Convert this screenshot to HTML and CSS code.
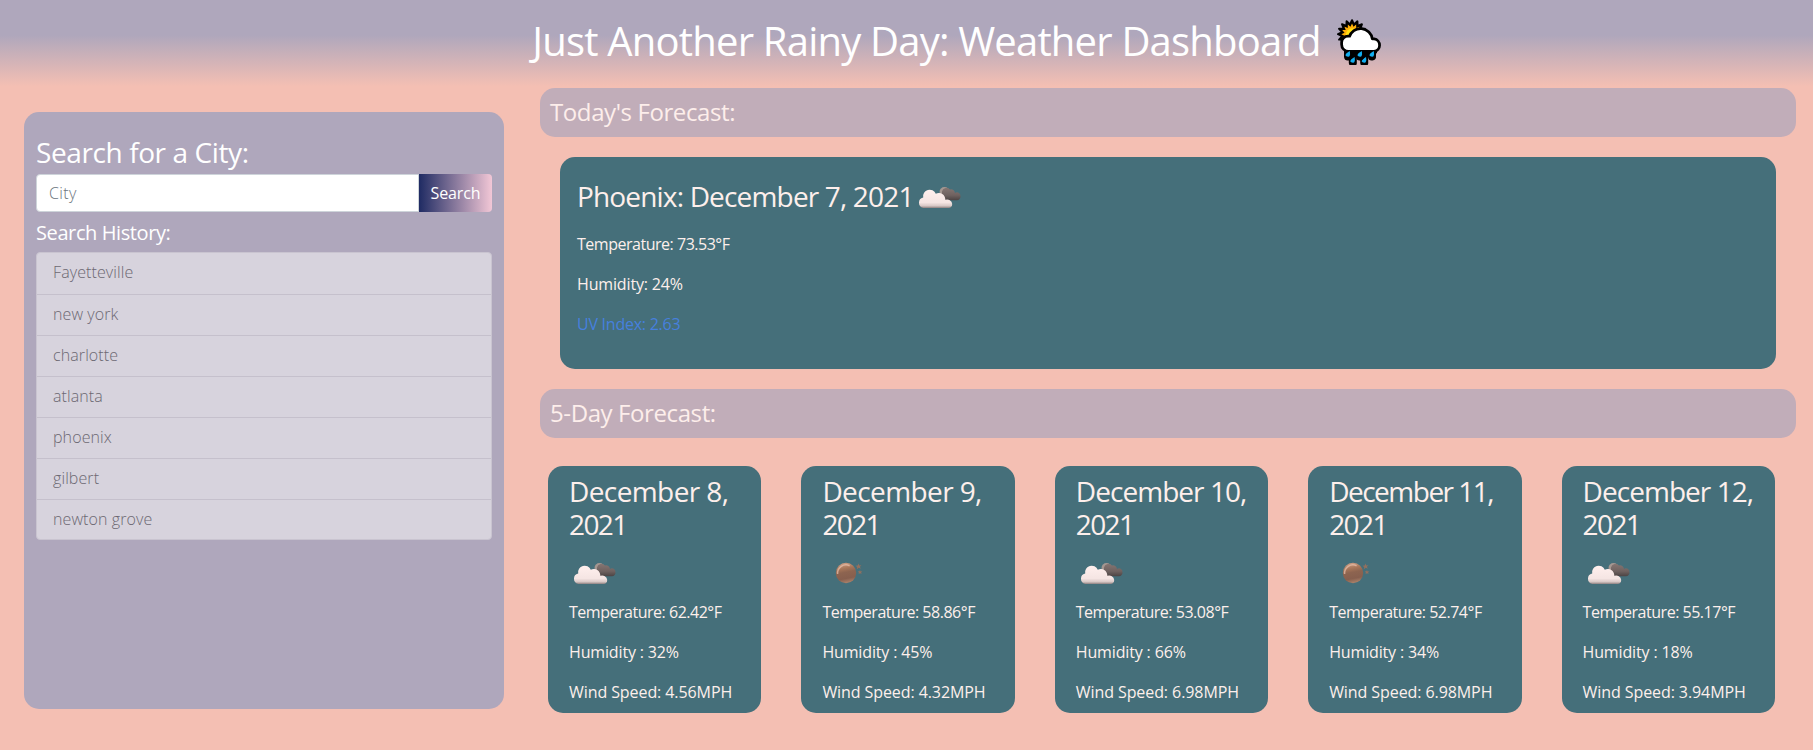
FILE: index.html
```html
<!DOCTYPE html>
<html lang="en">
<head>
<meta charset="utf-8">
<title>Weather Dashboard</title>
<link rel="stylesheet" href="styles.css">
</head>
<body>
<svg class="defs" aria-hidden="true">
  <defs>
    <linearGradient id="cloudFill" x1="0" y1="0" x2="0" y2="1">
      <stop offset="0" stop-color="#fff0ee"/><stop offset=".7" stop-color="#f5e5e3"/><stop offset=".88" stop-color="#d8c8c6"/><stop offset="1" stop-color="#8e8080"/>
    </linearGradient>
    <linearGradient id="darkFill" x1="0" y1="0" x2="0" y2="1">
      <stop offset="0" stop-color="#857572"/><stop offset=".6" stop-color="#6f6260"/><stop offset="1" stop-color="#4c4444"/>
    </linearGradient>
    <linearGradient id="moonFill" x1=".2" y1="0" x2=".4" y2="1">
      <stop offset="0" stop-color="#d3a58c"/><stop offset=".3" stop-color="#a87659"/><stop offset=".5" stop-color="#8d6450"/><stop offset=".8" stop-color="#875f4e"/><stop offset="1" stop-color="#a87f68"/>
    </linearGradient>
    <symbol id="clouds" viewBox="0 0 50 50">
      <circle cx="30.5" cy="20" r="5" fill="#a59791"/>
      <path d="M28 25V19.5a4.500 4.500 0 0 1 8-2a4 4 0 0 1 5 3.500a3.500 3.500 0 0 1 5.500 3.200a3.600 3.600 0 0 1-3.500 4H31z" fill="url(#darkFill)"/>
      <path d="M9.500 36a5 5 0 0 1-4.500-5.300a5.200 5.200 0 0 1 4.200-5.200a6.600 6.600 0 0 1 12.600-3.700a6.500 6.500 0 0 1 9.500 6a5 5 0 0 1 6.900 4.200a4 4 0 0 1-3.700 4z" fill="url(#cloudFill)"/>
    </symbol>
    <symbol id="moon" viewBox="0 0 50 50">
      <circle cx="24" cy="25" r="10.200" fill="url(#moonFill)"/>
      <path d="M15.600 26a8.400 8.400 0 0 1 12-8.300" fill="none" stroke="#e7bea8" stroke-width="1.500" opacity=".75"/>
      <path d="M36.500 15.500l.8 1.900 2.200-.2-1.600 1.500.9 2-2-.9-2 1.400.4-2.200-1.700-1.300 2.200-.2zM38 22l.6 1.400 1.700-.1-1.200 1.200.5 1.500-1.500-.7-1.500.8.300-1.600-1.200-1.100 1.600-.2z" fill="#93705e"/>
    </symbol>
  </defs>
</svg>

<header class="header">
  <h1 class="title">Just Another Rainy Day: Weather Dashboard</h1>
  <svg class="logo" viewBox="0 0 46 46">
    <defs>
      <path id="sun" d="M14 0L9.800 2 12.900 5.400 8.300 5.600 9.900 9.900 5.600 8.300 5.400 12.900 2 9.800 0 14-2 9.800-5.400 12.900-5.600 8.300-9.900 9.900-8.300 5.600-12.900 5.400-9.800 2-14 0-9.800-2-12.900-5.400-8.300-5.600-9.900-9.900-5.600-8.300-5.400-12.900-2-9.800 0-14 2-9.800 5.400-12.900 5.600-8.300 9.900-9.900 8.300-5.600 12.900-5.400 9.800-2z"/>
      <path id="cloud" d="M11.500 31a5.500 5.500 0 0 1-5.500-5.500v-2a5 5 0 0 1 5-5h2.500a10.500 10.500 0 0 1 20.500 1.800q.3 1 1.500 1h1.500a4.900 4.900 0 0 1 0 9.700z"/>
      <g id="drop">
        <path d="M-4-3h8v5a4 4 0 0 1-8 1z" fill="#000"/>
        <path d="M1.800-3q1 6-1.800 5.800-4-.5-1.500-3.500z" fill="#12aef0"/>
      </g>
    </defs>
    <use href="#sun" transform="translate(15 15.200)" stroke="#000" stroke-width="2" stroke-linejoin="round"/>
    <use href="#sun" transform="translate(15 15.200) scale(.76)" fill="#ffaf08"/>
    <circle cx="15.500" cy="16" r="6.800" fill="#ffe012"/>
    <use href="#cloud" stroke="#000" stroke-width="5.500"/>
    <path d="M8 30h32v4l-7 4H13l-5-3z"/>
    <use href="#drop" x="15.800" y="41"/><use href="#drop" x="27.200" y="41"/>
    <use href="#drop" x="11" y="35"/><use href="#drop" x="23" y="35"/><use href="#drop" x="35" y="35"/>
    <use href="#cloud" fill="#fff"/>
  </svg>
</header>

<div class="layout">
  <aside class="sidebar">
    <h3 class="search-title">Search for a City:</h3>
    <form class="search">
      <input class="search-input" type="text" placeholder="City" aria-label="City">
      <button class="search-button" type="button">Search</button>
    </form>
    <h5 class="history-title">Search History:</h5>
    <ul class="history">
      <li>Fayetteville</li>
      <li>new york</li>
      <li>charlotte</li>
      <li>atlanta</li>
      <li>phoenix</li>
      <li>gilbert</li>
      <li>newton grove</li>
    </ul>
  </aside>

  <main class="main">
    <h4 class="bar">Today's Forecast:</h4>
    <section class="today">
      <h3 class="today-title"><span>Phoenix: December 7, 2021</span><svg class="icon"><use href="#clouds"/></svg></h3>
      <p class="temp">Temperature: 73.53°F</p>
      <p class="humidity">Humidity: 24%</p>
      <p class="uv">UV Index: 2.63</p>
    </section>
    <h4 class="bar">5-Day Forecast:</h4>
    <section class="days">
      <article class="day">
        <h3>December 8, <span class="year">2021</span></h3>
        <svg class="icon"><use href="#clouds"/></svg>
        <p class="temp">Temperature: 62.42°F</p><p class="humidity">Humidity : 32%</p><p class="wind">Wind Speed: 4.56MPH</p>
      </article>
      <article class="day">
        <h3>December 9, <span class="year">2021</span></h3>
        <svg class="icon"><use href="#moon"/></svg>
        <p class="temp">Temperature: 58.86°F</p><p class="humidity">Humidity : 45%</p><p class="wind">Wind Speed: 4.32MPH</p>
      </article>
      <article class="day">
        <h3 class="long">December 10, <span class="year">2021</span></h3>
        <svg class="icon"><use href="#clouds"/></svg>
        <p class="temp">Temperature: 53.08°F</p><p class="humidity">Humidity : 66%</p><p class="wind">Wind Speed: 6.98MPH</p>
      </article>
      <article class="day">
        <h3 class="long narrow">December 11, <span class="year">2021</span></h3>
        <svg class="icon"><use href="#moon"/></svg>
        <p class="temp">Temperature: 52.74°F</p><p class="humidity">Humidity : 34%</p><p class="wind">Wind Speed: 6.98MPH</p>
      </article>
      <article class="day">
        <h3 class="long">December 12, <span class="year">2021</span></h3>
        <svg class="icon"><use href="#clouds"/></svg>
        <p class="temp">Temperature: 55.17°F</p><p class="humidity">Humidity : 18%</p><p class="wind">Wind Speed: 3.94MPH</p>
      </article>
    </section>
  </main>
</div>
</body>
</html>
```
FILE: styles.css
```css
* { box-sizing: border-box; }
body {
  margin: 0;
  height: 750px;
  overflow: hidden;
  background: #f4bfb3;
  color: #fff;
  font: 400 16px/24px "Open Sans", "Noto Sans", sans-serif;
  letter-spacing: -0.4px;
}
h1, h3, h4, h5, p, ul { margin: 0; padding: 0; font-weight: 400; }
.defs { position: absolute; width: 0; height: 0; }

.header {
  display: flex;
  justify-content: center;
  gap: 16px;
  height: 88px;
  padding: 18px 0 0 102px;
  background: linear-gradient(#afa7bc 40%, #f4bfb3 98%);
}
.title { margin-top: -1px; font-size: 40px; line-height: 48px; letter-spacing: -0.8px; white-space: nowrap; }
.logo { width: 46px; height: 46px; margin-top: 1px; }

.layout { display: flex; gap: 36px; padding: 0 17px 0 24px; }

.sidebar {
  flex: none;
  width: 480px;
  height: 597px;
  margin-top: 24px;
  padding: 23px 12px;
  border-radius: 15px;
  background: #afa7bc;
}
.search-title { margin-bottom: 5px; font-size: 28px; line-height: 34px; }
.search { display: flex; height: 38px; }
.search-input {
  flex: 1;
  min-width: 0;
  padding: 0 12px;
  border: 1px solid #ced4da;
  border-radius: 4px 0 0 4px;
  background: #fff;
  font: inherit;
  font-weight: 300;
  letter-spacing: 0.4px;
}
.search-input::placeholder { color: #6c757d; opacity: 1; }
.search-button {
  width: 73px;
  padding: 0;
  border: 0;
  border-radius: 0 4px 4px 0;
  background: linear-gradient(to right, #1f2b63, #f2c7d6);
  color: #fff;
  font: inherit;
  letter-spacing: -0.1px;
}
.history-title { margin: 9px 0 7px; font-size: 20px; line-height: 24px; }
.history {
  border: 1px solid #c9c4d0;
  border-radius: 4px;
  background: #d7d3dd;
  color: #6c6872;
  font-weight: 300;
  letter-spacing: 0.1px;
  list-style: none;
}
.history li { height: 41px; padding: 7px 16px; }
.history li:last-child { height: 40px; }
.history li + li { border-top: 1px solid #c5c0cc; }

.main { flex: 1; min-width: 0; }
.bar {
  height: 49px;
  padding: 9px 10px;
  border-radius: 15px;
  background: #c1adb9;
  color: #fdeeeb;
  font-size: 24px;
  line-height: 29px;
}
.today {
  height: 212px;
  margin: 20px;
  padding: 15px 17px;
  border-radius: 15px;
  background: #456f7a;
  color: #fdefec;
}
.today p { margin-bottom: 16px; }
.temp { letter-spacing: -0.48px; }
.humidity { letter-spacing: -0.15px; }
.wind { letter-spacing: -0.08px; }
.today .uv { color: #4680de; letter-spacing: -0.25px; }
.today-title { display: flex; align-items: center; height: 50px; margin-bottom: 10px; font-size: 28px; line-height: 34px; letter-spacing: -0.83px; }
.today-title span { margin-top: -2px; }
.icon { display: block; width: 50px; height: 50px; }

.days {
  display: grid;
  grid-template-columns: repeat(5, 213.4px);
  gap: 40px;
  padding: 28px 0 0 8px;
}
.day {
  height: 247px;
  padding: 9px 20px 0 21px;
  border-radius: 15px;
  background: #456f7a;
  color: #fdefec;
}
.day h3 { margin-bottom: 7px; font-size: 28px; line-height: 33px; letter-spacing: -0.6px; }
.day .long { margin-right: -8px; letter-spacing: -0.95px; }
.day .narrow { letter-spacing: -1.5px; }
.day .year { letter-spacing: -1.6px; }
.day .icon { margin-bottom: 2px; }
.day p { margin-bottom: 16px; white-space: nowrap; }
```
